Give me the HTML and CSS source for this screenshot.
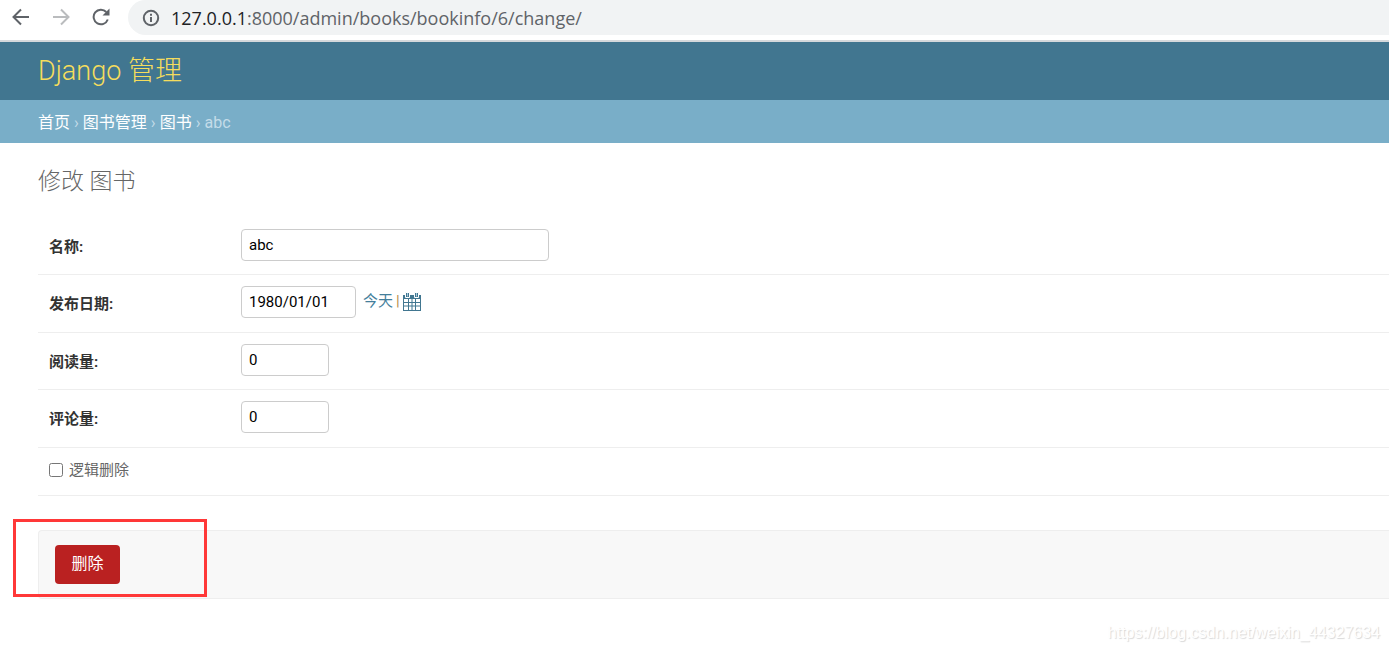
FILE: index.html
```html
<!DOCTYPE html>
<html lang="zh-CN">
<head>
<meta charset="utf-8">
<title>修改 图书 | Django 管理</title>
<link rel="stylesheet" href="styles.css">
</head>
<body>
<div class="toolbar">
  <button class="nav-button" type="button" aria-label="后退">
    <svg width="18" height="18" viewBox="0 0 18 18" fill="none" stroke="#5f6368" stroke-width="2"><path d="M17 9H2M9 1.500L1.500 9L9 16.500"/></svg>
  </button>
  <button class="nav-button" type="button" aria-label="前进">
    <svg width="18" height="18" viewBox="0 0 18 18" fill="none" stroke="#babcbe" stroke-width="2"><path d="M1 9H16M9 1.500L16.500 9L9 16.500"/></svg>
  </button>
  <button class="nav-button" type="button" aria-label="重新加载">
    <svg width="18" height="18" viewBox="0 0 18 18"><path d="M15.800 11.500A7.300 7.300 0 1 1 14.300 4" fill="none" stroke="#5f6368" stroke-width="2"/><path d="M17.500 0.500V7.500H10.500Z" fill="#5f6368"/></svg>
  </button>
  <div class="address">
    <svg width="18" height="18" viewBox="0 0 18 18"><circle cx="9" cy="9" r="7.200" fill="none" stroke="#5f6368" stroke-width="2"/><path d="M8 4.800h2v2H8zM8 8h2v5H8z" fill="#5f6368"/></svg>
    <span class="url"><span class="url-host">127.0.0.1</span>:8000/admin/books/bookinfo/6/change/</span>
  </div>
</div>
<header class="site-header"><h1 class="site-name"><a href="#">Django 管理</a></h1></header>
<nav class="breadcrumbs"><a href="#">首页</a><span class="separator">›</span><a href="#">图书管理</a><span class="separator">›</span><a href="#">图书</a><span class="separator">›</span><span>abc</span></nav>
<main class="content">
  <h2 class="page-title">修改 图书</h2>
  <form>
    <div class="form-row">
      <label class="field-label" for="name">名称:</label>
      <input class="field field-wide" id="name" type="text" value="abc">
    </div>
    <div class="form-row">
      <label class="field-label" for="date">发布日期:</label>
      <input class="field field-date" id="date" type="text" value="1980/01/01">
      <span class="shortcuts"><a href="#">今天</a><span class="divider">|</span><a class="calendar" href="#" aria-label="选择日期"><svg width="18" height="19" viewBox="0 0 18 19"><path d="M0 3h18v16H0z" fill="#417690"/><path d="M2.500 0.500h4v5h-4zM11.500 0.500h4v5h-4z" fill="#417690" stroke="#fff"/><path d="M4 1h1v3.500H4zM13 1h1v3.500h-1z" fill="#a9cbdc"/><path d="M1 7H5v3H1zM6 7h2.500v3H6zM9.500 7H12v3H9.500zM13 7h4v3H13zM1 11H5V13.500H1zM6 11h2.500v2.500H6zM9.500 11H12V13.500H9.500zM13 11h4v2.500H13zM1 14.500H5v3.500H1zM6 14.500h2.500v3.500H6zM9.500 14.500H12v3.500H9.500zM13 14.500h4v3.500H13z" fill="#fff"/></svg></a></span>
    </div>
    <div class="form-row">
      <label class="field-label" for="reads">阅读量:</label>
      <input class="field field-number" id="reads" type="text" inputmode="numeric" value="0">
    </div>
    <div class="form-row">
      <label class="field-label" for="comments">评论量:</label>
      <input class="field field-number" id="comments" type="text" inputmode="numeric" value="0">
    </div>
    <div class="form-row checkbox-row">
      <input class="checkbox" id="deleted" type="checkbox">
      <label for="deleted">逻辑删除</label>
    </div>
    <div class="submit-row">
      <button class="delete-button" type="button">删除</button>
      <span class="highlight" aria-hidden="true"></span>
    </div>
  </form>
</main>
<footer class="watermark">https://blog.csdn.net/weixin_44327634</footer>
</body>
</html>
```
FILE: styles.css
```css
* {
  box-sizing: border-box;
}

body {
  margin: 0;
  background: #fff;
  color: #333;
  font: 15px/20px Roboto, "Noto Sans CJK SC", sans-serif;
}

a {
  color: inherit;
  text-decoration: none;
}

svg {
  display: block;
}

.toolbar {
  display: flex;
  align-items: flex-start;
  gap: 22px;
  height: 42px;
  padding-left: 12px;
  border-bottom: 2px solid #d5d9dc;
}

.nav-button {
  padding: 8px 0;
  border: 0;
  background: none;
}

.address {
  display: flex;
  flex: 1;
  align-items: center;
  gap: 11px;
  height: 35px;
  margin-left: -4px;
  padding-left: 14px;
  border-radius: 18px 0 0 18px;
  background: #f1f3f4;
}

.url {
  color: #5f6368;
  font: 18px/34px "Open Sans", sans-serif;
}

.url-host {
  color: #202124;
}

.site-header {
  padding: 13px 38px;
  background: #417690;
}

.site-name {
  margin: 0;
  color: #f5dd5d;
  font-size: 27px;
  font-weight: 300;
  line-height: 32px;
}

.breadcrumbs {
  display: flex;
  gap: 4px;
  padding: 13px 38px 10px;
  background: #79aec8;
  color: #c4dce8;
  font-size: 16px;
}

.breadcrumbs a {
  color: #fff;
}

.content {
  padding: 25px 0 0 38px;
}

.page-title {
  margin: 0 0 22px;
  color: #666;
  font-size: 23px;
  font-weight: 300;
  line-height: 28px;
}

.form-row {
  display: flex;
  align-items: flex-start;
  padding: 11px 11px 13px;
  border-bottom: 1px solid #eee;
}

.form-row:nth-of-type(even) {
  padding-bottom: 14px;
}

.field-label {
  width: 192px;
  padding-top: 8px;
  font-weight: 700;
}

.field {
  height: 32px;
  padding: 5px 7px;
  border: 1px solid #ccc;
  border-radius: 4px;
  background: #fff;
  color: #000;
  font: inherit;
}

.field-wide {
  width: 308px;
}

.field-date {
  width: 115px;
}

.field-number {
  width: 88px;
}

.shortcuts {
  display: flex;
  align-items: center;
  gap: 3px;
  padding: 5px 0 0 7px;
  color: #447e9b;
}

.divider {
  color: #b58a4b;
}

.form-row.checkbox-row {
  align-items: center;
  gap: 6px;
  padding: 12px 11px 15px;
  color: #666;
}

.checkbox {
  width: 14px;
  height: 14px;
  margin: 0;
}

.submit-row {
  position: relative;
  margin-top: 34px;
  padding: 14px 16px;
  border: 1px solid #eee;
  border-right: 0;
  border-radius: 4px 0 0 4px;
  background: #f8f8f8;
}

.delete-button {
  display: block;
  min-width: 65px;
  padding: 9px 16px 10px;
  border: 0;
  border-radius: 4px;
  background: #ba2121;
  color: #fff;
  font: inherit;
  font-size: 16px;
}

.highlight {
  position: absolute;
  top: -12px;
  left: -26px;
  width: 194px;
  height: 78px;
  border: 3px solid #ff3838;
  pointer-events: none;
}

.watermark {
  padding: 24px 9px 8px;
  color: #fff;
  font: 16px/20px "Liberation Sans", sans-serif;
  text-align: right;
  text-shadow: 1px 1px 1px #d8d8d8;
}
```
